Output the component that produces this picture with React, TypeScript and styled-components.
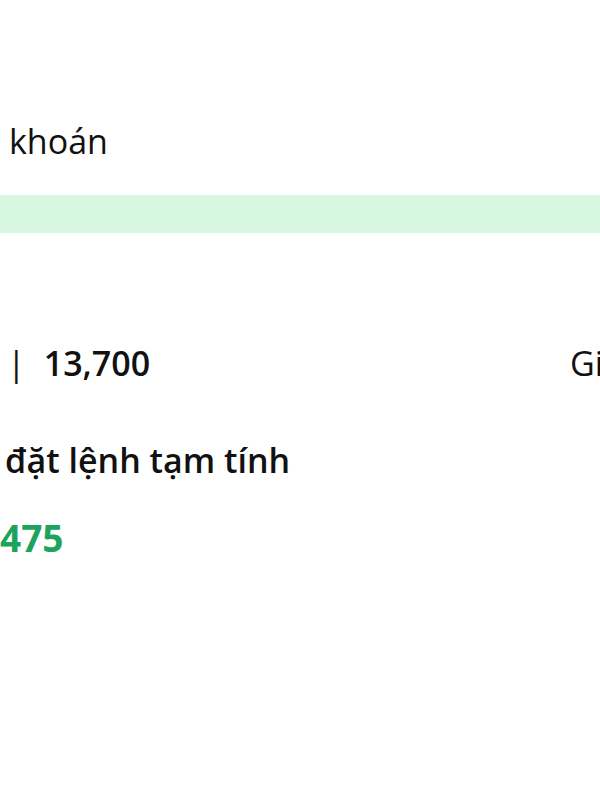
import React from 'react'
import styled, { createGlobalStyle } from 'styled-components'

const GlobalStyle = createGlobalStyle`
  html, body {
    margin: 0;
    padding: 0;
    background: #fff;
    overflow: hidden;
  }
  body {
    font-family: "Open Sans", "Noto Sans", sans-serif;
    color: #111;
  }
`

const Screen = styled.div`
  width: 600px;
  height: 800px;
  overflow: hidden;
  display: flex;
  flex-direction: column;
`

const Title = styled.div`
  padding: 118px 0 0 9px;
  font-size: 34px;
  line-height: 46px;
  font-weight: 400;
  white-space: nowrap;
`

const Band = styled.div`
  margin-top: 31px;
  height: 38px;
  background: #d8f7e0;
`

const PriceRow = styled.div`
  margin-top: 108px;
  display: flex;
  align-items: center;
  white-space: nowrap;
  font-size: 34px;
  line-height: 44px;
`

const Divider = styled.span`
  padding-left: 7px;
  font-weight: 400;
`

const Price = styled.span`
  margin-left: 18px;
  font-weight: 600;
`

const Trailing = styled.span`
  margin-left: auto;
  width: 30px;
  overflow: hidden;
  font-weight: 400;
`

const Label = styled.div`
  margin-top: 52px;
  padding-left: 5px;
  font-size: 34px;
  line-height: 46px;
  font-weight: 600;
  white-space: nowrap;
`

const Amount = styled.div`
  margin-top: 31px;
  font-size: 37px;
  line-height: 48px;
  font-weight: 700;
  color: #1ca45c;
  white-space: nowrap;
`

export default function App() {
  return (
    <>
      <GlobalStyle />
      <Screen>
        <Title>khoán</Title>
        <Band />
        <PriceRow>
          <Divider>|</Divider>
          <Price>13,700</Price>
          <Trailing>Giá</Trailing>
        </PriceRow>
        <Label>đặt lệnh tạm tính</Label>
        <Amount>475</Amount>
      </Screen>
    </>
  )
}
